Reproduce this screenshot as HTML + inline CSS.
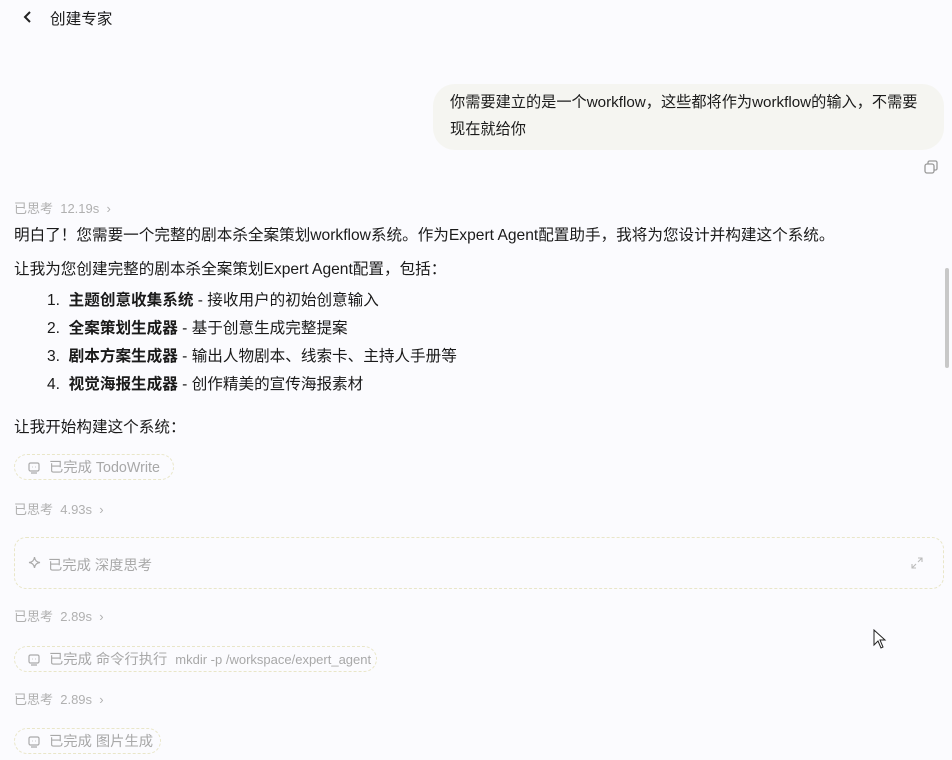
<!DOCTYPE html>
<html><head><meta charset="utf-8"><style>
body{margin:0;width:952px;height:760px;background:#fbfbfe;font-family:"Liberation Sans","Noto Sans CJK SC",sans-serif;color:#1a1a1a;position:relative;overflow:hidden}
.a{position:absolute;white-space:nowrap}
.t{font-size:15.6px}
.g{font-size:13px;color:#b0b0b0}
.chip{position:absolute;left:14px;height:26px;border:1px dashed #e9e6c8;border-radius:14px;font-size:14.3px;color:#a8a8a8;line-height:26px;padding-left:34px;box-sizing:border-box;background:#fbfbfe}
.chip svg{position:absolute;left:13px;top:7px}
b{font-weight:bold}
</style></head><body>
<svg class="a" style="left:22px;top:10px" width="12" height="14" viewBox="0 0 12 14"><path d="M8 2 L3 7 L8 12" fill="none" stroke="#222" stroke-width="2"/></svg>
<div class="a t" style="left:50px;top:7px">创建专家</div>
<div class="a" style="left:433px;top:84px;width:511px;height:66px;background:#f5f5f1;border-radius:22px"></div>
<div class="a t" style="left:450px;top:89px;line-height:27px;font-size:15.2px">你需要建立的是一个workflow，这些都将作为workflow的输入，不需要<br>现在就给你</div>
<svg class="a" style="left:923px;top:159px" width="16" height="16" viewBox="0 0 16 16"><rect x="2" y="5" width="9" height="9" rx="2" fill="none" stroke="#999" stroke-width="1.3"/><path d="M5 5V3.5A1.5 1.5 0 0 1 6.5 2H12.5A1.5 1.5 0 0 1 14 3.5V9.5A1.5 1.5 0 0 1 12.5 11H11" fill="none" stroke="#999" stroke-width="1.3"/></svg>
<div class="a g" style="left:14px;top:198px">已思考&nbsp; 12.19s &nbsp;›</div>
<div class="a t" style="left:14px;top:223px">明白了！您需要一个完整的剧本杀全案策划workflow系统。作为Expert Agent配置助手，我将为您设计并构建这个系统。</div>
<div class="a t" style="left:14px;top:257px">让我为您创建完整的剧本杀全案策划Expert Agent配置，包括：</div>
<div class="a t" style="left:47px;top:287px;line-height:28px">1.&nbsp; <b>主题创意收集系统</b> - 接收用户的初始创意输入<br>2.&nbsp; <b>全案策划生成器</b> - 基于创意生成完整提案<br>3.&nbsp; <b>剧本方案生成器</b> - 输出人物剧本、线索卡、主持人手册等<br>4.&nbsp; <b>视觉海报生成器</b> - 创作精美的宣传海报素材</div>
<div class="a t" style="left:14px;top:415px">让我开始构建这个系统：</div>
<div class="chip" style="top:454px;width:160px"><svg width="12" height="12" viewBox="0 0 12 12"><rect x="1" y="1" width="10" height="8" rx="1.5" fill="none" stroke="#aaa" stroke-width="1.2"/><path d="M3 11H9M4.5 5h0.5M7 5h0.5" stroke="#aaa" stroke-width="1.2"/></svg>已完成 TodoWrite</div>
<div class="a g" style="left:14px;top:499px">已思考&nbsp; 4.93s &nbsp;›</div>
<div class="a" style="left:14px;top:537px;width:930px;height:52px;border:1px dashed #e9e6c8;border-radius:12px;box-sizing:border-box"></div>
<svg class="a" style="left:28px;top:556px" width="13" height="13" viewBox="0 0 13 13"><path d="M6.5 1 Q7 6 12 6.5 Q7 7 6.5 12 Q6 7 1 6.5 Q6 6 6.5 1Z" fill="none" stroke="#aaa" stroke-width="1.2"/></svg>
<div class="a" style="left:48px;top:554px;font-size:14.3px;color:#a8a8a8">已完成 深度思考</div>
<svg class="a" style="left:911px;top:557px" width="12" height="12" viewBox="0 0 12 12"><path d="M7 1H11V5M11 1L7 5M5 11H1V7M1 11L5 7" fill="none" stroke="#bbb" stroke-width="1.1"/></svg>
<div class="a g" style="left:14px;top:606px">已思考&nbsp; 2.89s &nbsp;›</div>
<div class="chip" style="top:646px;width:363px"><svg width="12" height="12" viewBox="0 0 12 12"><rect x="1" y="1" width="10" height="8" rx="1.5" fill="none" stroke="#aaa" stroke-width="1.2"/><path d="M3 11H9M4.5 5h0.5M7 5h0.5" stroke="#aaa" stroke-width="1.2"/></svg>已完成 命令行执行 &nbsp;<span style="font-size:13px">mkdir -p /workspace/expert_agent</span></div>
<div class="a g" style="left:14px;top:689px">已思考&nbsp; 2.89s &nbsp;›</div>
<div class="chip" style="top:728px;width:147px"><svg width="12" height="12" viewBox="0 0 12 12"><rect x="1" y="1" width="10" height="8" rx="1.5" fill="none" stroke="#aaa" stroke-width="1.2"/><path d="M3 11H9M4.5 5h0.5M7 5h0.5" stroke="#aaa" stroke-width="1.2"/></svg>已完成 图片生成</div>
<div class="a" style="left:945px;top:268px;width:4px;height:100px;background:#c8c8c8;border-radius:2px"></div>
<svg class="a" style="left:873px;top:629px" width="14" height="20" viewBox="0 0 14 20"><path d="M1 1V16L5 12L8 19L10 18L7 11H12Z" fill="#fff" stroke="#222" stroke-width="1"/></svg>
</body></html>
